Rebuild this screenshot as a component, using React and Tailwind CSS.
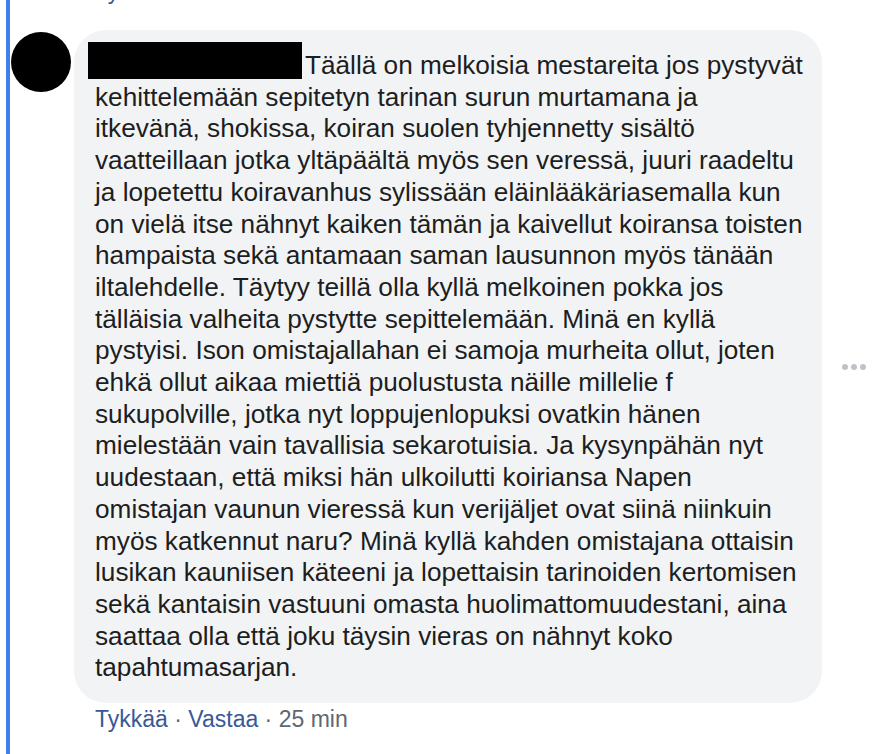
import React from 'react';

const LINES = [
    'kehittelemään sepitetyn tarinan surun murtamana ja',
    'itkevänä, shokissa, koiran suolen tyhjennetty sisältö',
    'vaatteillaan jotka yltäpäältä myös sen veressä, juuri raadeltu',
    'ja lopetettu koiravanhus sylissään eläinlääkäriasemalla kun',
    'on vielä itse nähnyt kaiken tämän ja kaivellut koiransa toisten',
    'hampaista sekä antamaan saman lausunnon myös tänään',
    'iltalehdelle. Täytyy teillä olla kyllä melkoinen pokka jos',
    'tälläisia valheita pystytte sepittelemään. Minä en kyllä',
    'pystyisi. Ison omistajallahan ei samoja murheita ollut, joten',
    'ehkä ollut aikaa miettiä puolustusta näille millelie f',
    'sukupolville, jotka nyt loppujenlopuksi ovatkin hänen',
    'mielestään vain tavallisia sekarotuisia. Ja kysynpähän nyt',
    'uudestaan, että miksi hän ulkoilutti koiriansa Napen',
    'omistajan vaunun vieressä kun verijäljet ovat siinä niinkuin',
    'myös katkennut naru? Minä kyllä kahden omistajana ottaisin',
    'lusikan kauniisen käteeni ja lopettaisin tarinoiden kertomisen',
    'sekä kantaisin vastuuni omasta huolimattomuudestani, aina',
    'saattaa olla että joku täysin vieras on nähnyt koko',
    'tapahtumasarjan.',
];

const Actions = ({ time }) => (
    <div className="pl-[85px] text-[23px] leading-[28px] whitespace-nowrap">
        <span className="text-[#385898]">Tykkää</span>
        <span className="text-[#606770]"> · </span>
        <span className="text-[#385898]">Vastaa</span>
        {time && <span className="text-[#606770]"> · {time}</span>}
    </div>
);

export default function App() {
    return (
        <div
            className="min-h-screen flex bg-white text-[#1c1e21]"
            style={{ fontFamily: '"Liberation Sans", Arial, sans-serif' }}
        >
            {/* thread line */}
            <div className="ml-[6px] w-[4px] bg-[#4080ea] shrink-0" />

            <div className="flex-1">
                {/* tail of the previous comment */}
                <div className="-mt-[23px] h-[28px] overflow-hidden">
                    <Actions />
                </div>

                {/* comment */}
                <div className="mt-[25px] flex items-center">
                    <div className="self-start mt-[2px] ml-[1px] w-[60px] h-[60px] rounded-full bg-black shrink-0" />
                    <div className="ml-[3px] w-[748px] shrink-0 rounded-[32px] bg-[#f2f3f5] pl-[21px] pt-[20px] pb-[19px] text-[26.2px] leading-[31.7px] whitespace-nowrap">
                        <div className="relative pl-[210px]">
                            {/* redacted name */}
                            <div className="absolute left-[-7px] top-[-8px] w-[214px] h-[37px] bg-black" />
                            Täällä on melkoisia mestareita jos pystyvät
                        </div>
                        {LINES.map((line) => (
                            <div key={line}>{line}</div>
                        ))}
                    </div>
                    <div className="ml-[20px] flex gap-[3px]">
                        <span className="w-[6px] h-[6px] rounded-full bg-[#bec3c9]" />
                        <span className="w-[6px] h-[6px] rounded-full bg-[#bec3c9]" />
                        <span className="w-[6px] h-[6px] rounded-full bg-[#bec3c9]" />
                    </div>
                </div>

                <div className="mt-[2px]">
                    <Actions time="25 min" />
                </div>
            </div>
        </div>
    );
}
